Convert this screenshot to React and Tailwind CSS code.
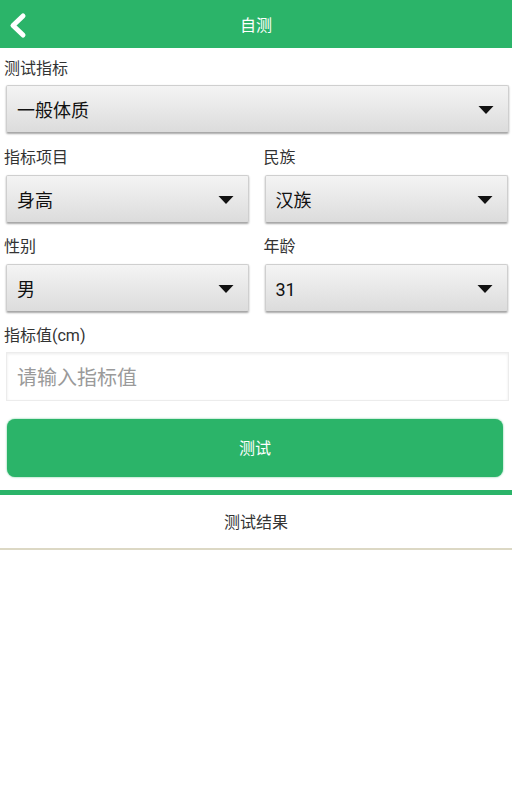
import React from "react";

const FONT = { fontFamily: 'Roboto, "Noto Sans CJK SC", "Noto Sans", sans-serif' };

function Arrow() {
  return (
    <svg width="16" height="8" viewBox="0 0 16 8" className="shrink-0 mt-[2px]">
      <polygon points="0.5,0 15.5,0 8,8" fill="#111" />
    </svg>
  );
}

function Spinner({ value, className = "" }) {
  return (
    <div
      className={
        "h-[48px] flex items-center justify-between pl-[10px] pr-[14px] rounded-[2px] border border-[#cfcfcf] border-b-[#a9a9a9] bg-gradient-to-b from-[#f4f4f4] to-[#dcdcdc] shadow-[0_1px_2px_rgba(0,0,0,0.35)] " +
        className
      }
    >
      <span className="text-[18px] text-[#111] leading-none pt-[3px]">{value}</span>
      <Arrow />
    </div>
  );
}

function Label({ children, className = "" }) {
  return (
    <div className={"h-[20px] leading-[20px] text-[16px] text-[#333] pt-[1px] " + className}>
      {children}
    </div>
  );
}

export default function App() {
  return (
    <div className="w-[512px] h-[800px] bg-white" style={FONT}>
      <div className="h-[48px] bg-[#2bb469] relative flex items-center justify-center">
        <svg
          width="24"
          height="28"
          viewBox="0 0 24 28"
          className="absolute left-[5px] top-[12px]"
        >
          <polyline
            points="18,4 8,13.5 18,23"
            fill="none"
            stroke="white"
            strokeWidth="5"
            strokeLinecap="round"
            strokeLinejoin="round"
          />
        </svg>
        <span className="text-white text-[16px] pt-[3px]">自测</span>
      </div>

      <div className="pl-[4px] pr-[4px]">
        <Label className="mt-[10px] mb-[7px]">测试指标</Label>
        <Spinner value="一般体质" className="ml-[2px] -mr-[1px]" />

        <div className="grid grid-cols-2 gap-x-[15px]">
          <div>
            <Label className="mt-[14px] mb-[8px]">指标项目</Label>
            <Spinner value="身高" className="ml-[2px]" />
          </div>
          <div>
            <Label className="mt-[14px] mb-[8px]">民族</Label>
            <Spinner value="汉族" className="ml-[1px]" />
          </div>
          <div>
            <Label className="mt-[13px] mb-[8px]">性别</Label>
            <Spinner value="男" className="ml-[2px]" />
          </div>
          <div>
            <Label className="mt-[13px] mb-[8px]">年龄</Label>
            <Spinner value="31" className="ml-[1px]" />
          </div>
        </div>

        <Label className="mt-[13px] mb-[7px]">指标值(cm)</Label>
        <div className="ml-[2px] -mr-[1px] h-[49px] border border-[#ececec] bg-white shadow-[inset_0_1px_3px_rgba(0,0,0,0.08)] flex items-center pl-[10px]">
          <span className="text-[20px] text-[#9a9a9a] leading-none pt-[3px]">请输入指标值</span>
        </div>

        <div className="mt-[18px] ml-[3px] mr-[5px] h-[58px] rounded-[8px] bg-[#2bb469] shadow-[0_0_2px_rgba(43,180,105,0.8)] flex items-center justify-center">
          <span className="text-white text-[16px] pt-[2px]">测试</span>
        </div>
      </div>

      <div className="mt-[13px] h-[5px] bg-[#2bb469]" />
      <div className="h-[53px] flex items-center justify-center">
        <span className="text-[16px] text-[#333] pt-[3px]">测试结果</span>
      </div>
      <div className="h-[2px] bg-[#dcd8c4]" />
    </div>
  );
}
